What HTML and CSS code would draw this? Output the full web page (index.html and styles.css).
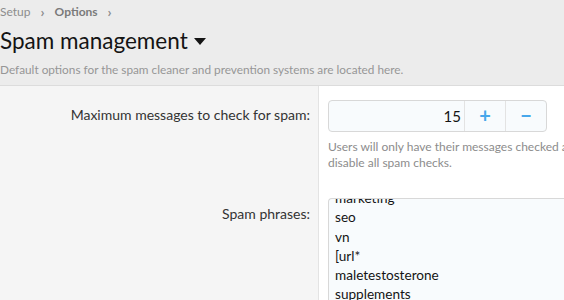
FILE: index.html
```html
<!DOCTYPE html>
<html lang="en">
  <head>
    <meta charset="UTF-8" />
    <title>Spam management</title>
    <link rel="stylesheet" href="styles.css">
  </head>
  <body>
    <div class="page-header">
      <ul class="crumbs">
        <li>Setup</li>
        <li class="sep">&#8250;</li>
        <li class="current">Options</li>
        <li class="sep">&#8250;</li>
      </ul>
      <h1 class="title">Spam management <span class="caret"></span></h1>
      <p class="desc">Default options for the spam cleaner and prevention systems are located here.</p>
    </div>

    <div class="form-block">
      <div class="form-row">
        <div class="form-label">Maximum messages to check for spam:</div>
        <div class="form-field">
          <div class="spinbox">
            <div class="spin-value">15</div>
            <div class="spin-btn">+</div>
            <div class="spin-btn">&minus;</div>
          </div>
          <p class="hint">Users will only have their messages checked a<br>disable all spam checks.</p>
        </div>
      </div>

      <div class="form-row">
        <div class="form-label label-area">Spam phrases:</div>
        <div class="form-field">
          <div class="textarea">
            <div class="textarea-lines">
              <div>marketing</div>
              <div>seo</div>
              <div>vn</div>
              <div>[url*</div>
              <div>maletestosterone</div>
              <div>supplements</div>
              <div>viagra</div>
            </div>
          </div>
        </div>
      </div>
    </div>
  </body>
</html>
```

FILE: styles.css
```css
body {
  margin: 0;
  background: #ececec;
  font-family: 'Lato', 'Noto Sans', sans-serif;
  color: #141414;
  overflow: hidden;
}

.page-header {
  padding: 3px 0 0 0;
  height: 82px;
}

.crumbs {
  list-style: none;
  margin: 0;
  padding: 0;
  display: flex;
  gap: 8px;
  font-size: 12px;
  line-height: 18px;
  color: #8c8c8c;
}

.crumbs .current {
  font-weight: bold;
  color: #7a7a7a;
}

.crumbs .sep {
  font-weight: bold;
  font-size: 14px;
  margin: 0 2px;
}

.title {
  margin: 5px 0 0 0;
  font-size: 22.5px;
  font-weight: normal;
  line-height: 30px;
  color: #141414;
}

.caret {
  display: inline-block;
  width: 0;
  height: 0;
  border-left: 6px solid transparent;
  border-right: 6px solid transparent;
  border-top: 7px solid #141414;
  vertical-align: middle;
  margin-left: 1px;
  position: relative;
  top: -2px;
}

.desc {
  margin: 5px 0 0 0;
  font-size: 11.8px;
  line-height: 18px;
  color: #969696;
}

.form-block {
  border-top: 1px solid #dcdcdc;
  background: #fff;
}

.form-row {
  display: flex;
}

.form-label {
  flex: none;
  width: 310px;
  padding-right: 8px;
  background: #f5f5f5;
  border-right: 1px solid #e3e3e3;
  text-align: right;
  font-size: 14px;
  color: #333;
  padding-top: 20px;
}

.label-area {
  padding-top: 35px;
}

.form-field {
  flex: 1;
  min-width: 0;
  padding: 14px 0 0 9px;
}

.spinbox {
  display: flex;
  width: 217px;
  height: 30px;
  border: 1px solid #d8d8d8;
  border-radius: 4px;
  background: #f8fbfd;
}

.spin-value {
  flex: 1;
  text-align: right;
  padding-right: 3px;
  font-size: 15px;
  line-height: 30px;
  color: #141414;
}

.spin-btn {
  width: 40px;
  border-left: 1px solid #e3e3e3;
  text-align: center;
  color: #47a7eb;
  font-size: 20px;
  font-weight: bold;
  line-height: 29px;
}

.hint {
  margin: 7px 0 0 0;
  font-size: 12px;
  line-height: 15.5px;
  color: #8c8c8c;
  white-space: nowrap;
}

.form-row + .form-row .form-field {
  padding-top: 28px;
}

.textarea {
  height: 140px;
  overflow: hidden;
  border: 1px solid #d8d8d8;
  border-right: none;
  border-radius: 4px 0 0 0;
  background: #f8fbfd;
  padding-left: 6px;
}

.textarea-lines {
  margin-top: -10px;
  font-size: 13.6px;
  line-height: 19.3px;
  color: #141414;
}
```
